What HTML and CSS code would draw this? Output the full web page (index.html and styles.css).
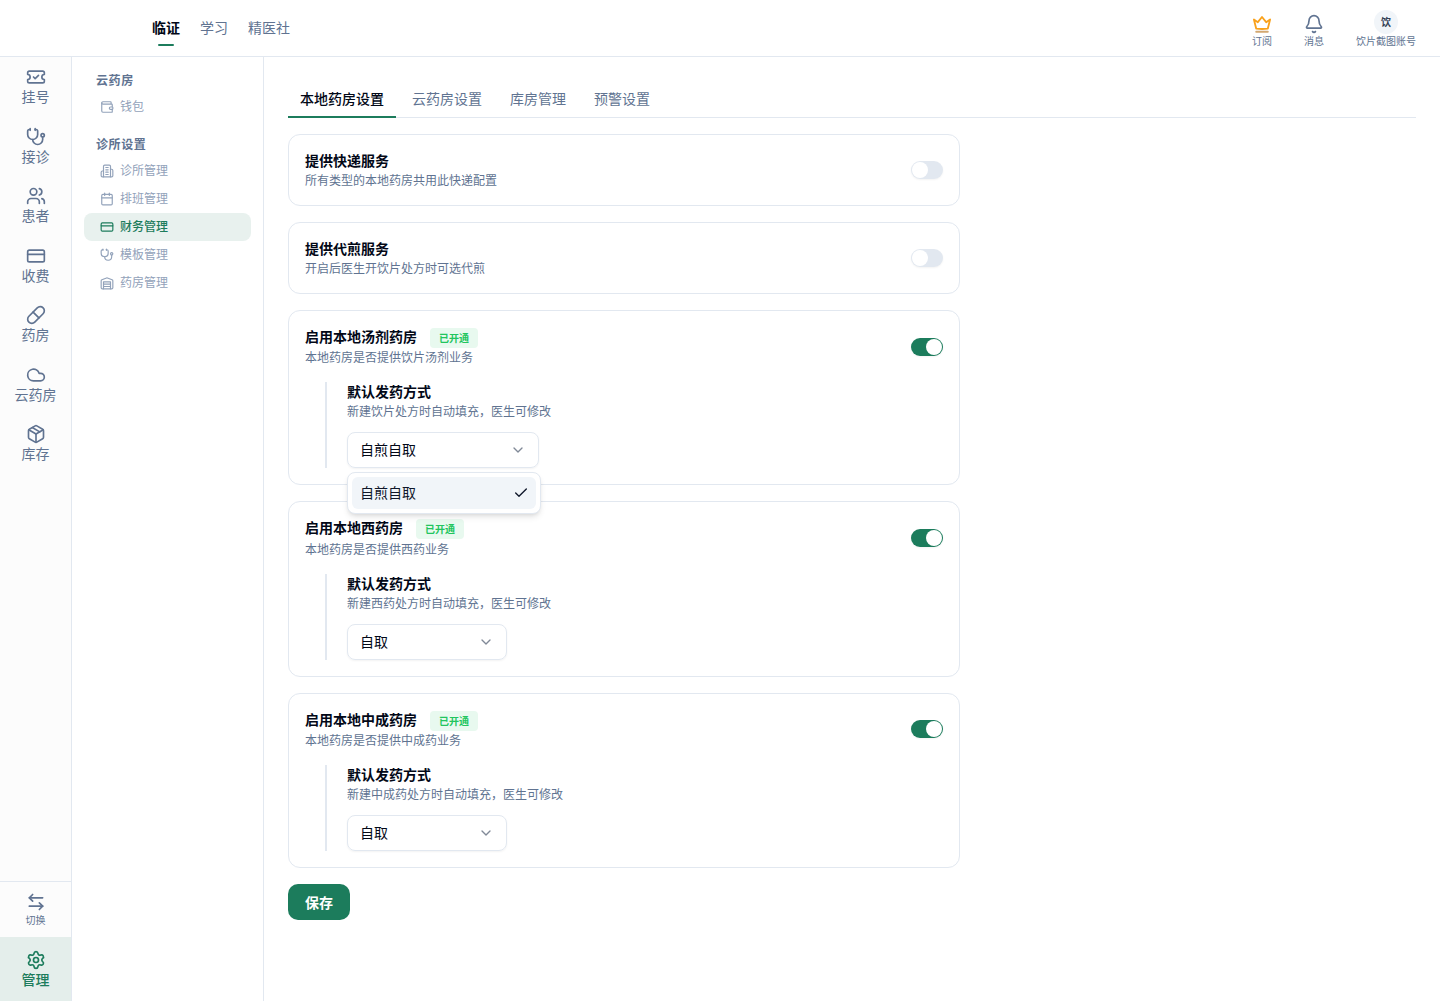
FILE: index.html
```html
<!DOCTYPE html>
<html lang="zh-Hans">
<head>
  <meta charset="UTF-8" />
  <meta name="viewport" content="width=device-width, initial-scale=1.0"/>
  <title>药房管理</title>
  <link rel="stylesheet" href="styles.css">
</head>
<body>
  <header class="topbar">
    <nav class="top-nav">
      <a class="top-link active">临证</a>
      <a class="top-link">学习</a>
      <a class="top-link">精医社</a>
    </nav>
    <div class="top-actions">
      <div class="action">
        <svg class="icon crown" viewBox="0 0 24 24"><path d="M2.3 6.5 5 17.5q7 1 14 0L21.7 6.5 17 9.8 12 3.6 7 9.8Z"/><path class="crown-base" d="M5 21.3h14"/></svg>
        <span>订阅</span>
      </div>
      <div class="action">
        <svg class="icon" viewBox="0 0 24 24"><path d="M10.268 21a2 2 0 0 0 3.464 0"/><path d="M3.262 15.326A1 1 0 0 0 4 17h16a1 1 0 0 0 .74-1.673C19.41 13.956 18 12.499 18 8A6 6 0 0 0 6 8c0 4.499-1.411 5.956-2.738 7.326"/></svg>
        <span>消息</span>
      </div>
      <div class="action">
        <div class="avatar">饮</div>
        <span>饮片截图账号</span>
      </div>
    </div>
  </header>

  <div class="layout">
    <aside class="rail">
      <nav class="rail-list">
        <a class="rail-item">
          <svg class="icon" viewBox="0 0 24 24"><path d="M2 9a3 3 0 1 1 0 6v2a2 2 0 0 0 2 2h16a2 2 0 0 0 2-2v-2a3 3 0 1 1 0-6V7a2 2 0 0 0-2-2H4a2 2 0 0 0-2 2Z"/><path d="m9 12 2 2 4-4"/></svg>
          <span>挂号</span>
        </a>
        <a class="rail-item">
          <svg class="icon" viewBox="0 0 24 24"><path d="M11 2v2"/><path d="M5 2v2"/><path d="M5 3H4a2 2 0 0 0-2 2v4a6 6 0 0 0 12 0V5a2 2 0 0 0-2-2h-1"/><path d="M8 15a6 6 0 0 0 12 0v-3"/><circle cx="20" cy="10" r="2"/></svg>
          <span>接诊</span>
        </a>
        <a class="rail-item">
          <svg class="icon" viewBox="0 0 24 24"><path d="M16 21v-2a4 4 0 0 0-4-4H6a4 4 0 0 0-4 4v2"/><circle cx="9" cy="7" r="4"/><path d="M22 21v-2a4 4 0 0 0-3-3.87"/><path d="M16 3.13a4 4 0 0 1 0 7.75"/></svg>
          <span>患者</span>
        </a>
        <a class="rail-item">
          <svg class="icon" viewBox="0 0 24 24"><rect x="2" y="5" width="20" height="14" rx="2"/><path d="M2 10h20"/></svg>
          <span>收费</span>
        </a>
        <a class="rail-item">
          <svg class="icon" viewBox="0 0 24 24"><path d="m10.5 20.5 10-10a4.95 4.95 0 1 0-7-7l-10 10a4.95 4.95 0 1 0 7 7Z"/><path d="m8.5 8.5 7 7"/></svg>
          <span>药房</span>
        </a>
        <a class="rail-item">
          <svg class="icon" viewBox="0 0 24 24"><path d="M17.5 19H9a7 7 0 1 1 6.71-9h1.79a4.5 4.5 0 1 1 0 9Z"/></svg>
          <span>云药房</span>
        </a>
        <a class="rail-item">
          <svg class="icon" viewBox="0 0 24 24"><path d="M11 21.73a2 2 0 0 0 2 0l7-4A2 2 0 0 0 21 16V8a2 2 0 0 0-1-1.73l-7-4a2 2 0 0 0-2 0l-7 4A2 2 0 0 0 3 8v8a2 2 0 0 0 1 1.73z"/><path d="M12 22V12"/><path d="m3.3 7 8.7 5 8.7-5"/><path d="m7.5 4.27 9 5.15"/></svg>
          <span>库存</span>
        </a>
      </nav>
      <a class="rail-switch">
        <svg class="icon" viewBox="0 0 24 24"><path d="M8 3 4 7l4 4"/><path d="M4 7h16"/><path d="m16 21 4-4-4-4"/><path d="M20 17H4"/></svg>
        <span>切换</span>
      </a>
      <a class="rail-manage">
        <svg class="icon" viewBox="0 0 24 24"><path d="M9.671 4.136a2.34 2.34 0 0 1 4.659 0 2.34 2.34 0 0 0 3.319 1.915 2.34 2.34 0 0 1 2.33 4.033 2.34 2.34 0 0 0 0 3.831 2.34 2.34 0 0 1-2.33 4.033 2.34 2.34 0 0 0-3.319 1.915 2.34 2.34 0 0 1-4.659 0 2.34 2.34 0 0 0-3.32-1.915 2.34 2.34 0 0 1-2.33-4.033 2.34 2.34 0 0 0 0-3.831A2.34 2.34 0 0 1 6.35 6.051a2.34 2.34 0 0 0 3.319-1.915"/><circle cx="12" cy="12" r="3"/></svg>
        <span>管理</span>
      </a>
    </aside>

    <aside class="side">
      <h3 class="side-title">云药房</h3>
      <a class="side-item">
        <svg class="icon" viewBox="0 0 24 24"><path d="M19 7V4a1 1 0 0 0-1-1H5a2 2 0 0 0 0 4h15a1 1 0 0 1 1 1v4h-3a2 2 0 0 0 0 4h3a1 1 0 0 0 1-1v-2a1 1 0 0 0-1-1"/><path d="M3 5v14a2 2 0 0 0 2 2h15a1 1 0 0 0 1-1v-4"/></svg>
        <span>钱包</span>
      </a>
      <h3 class="side-title">诊所设置</h3>
      <a class="side-item">
        <svg class="icon" viewBox="0 0 24 24"><path d="M6 22V4a2 2 0 0 1 2-2h8a2 2 0 0 1 2 2v18Z"/><path d="M6 12H4a2 2 0 0 0-2 2v6a2 2 0 0 0 2 2h2"/><path d="M18 9h2a2 2 0 0 1 2 2v9a2 2 0 0 1-2 2h-2"/><path d="M10 6h4"/><path d="M10 10h4"/><path d="M10 14h4"/><path d="M10 18h4"/></svg>
        <span>诊所管理</span>
      </a>
      <a class="side-item">
        <svg class="icon" viewBox="0 0 24 24"><path d="M8 2v4"/><path d="M16 2v4"/><rect x="3" y="4" width="18" height="18" rx="2"/><path d="M3 10h18"/></svg>
        <span>排班管理</span>
      </a>
      <a class="side-item active">
        <svg class="icon" viewBox="0 0 24 24"><rect x="2" y="5" width="20" height="14" rx="2"/><path d="M2 10h20"/></svg>
        <span>财务管理</span>
      </a>
      <a class="side-item">
        <svg class="icon" viewBox="0 0 24 24"><path d="M11 2v2"/><path d="M5 2v2"/><path d="M5 3H4a2 2 0 0 0-2 2v4a6 6 0 0 0 12 0V5a2 2 0 0 0-2-2h-1"/><path d="M8 15a6 6 0 0 0 12 0v-3"/><circle cx="20" cy="10" r="2"/></svg>
        <span>模板管理</span>
      </a>
      <a class="side-item">
        <svg class="icon" viewBox="0 0 24 24"><path d="M22 8.35V20a2 2 0 0 1-2 2H4a2 2 0 0 1-2-2V8.35A2 2 0 0 1 3.26 6.5l8-3.2a2 2 0 0 1 1.48 0l8 3.2A2 2 0 0 1 22 8.35Z"/><path d="M6 18h12"/><path d="M6 14h12"/><path d="M6 22V10h12v12"/></svg>
        <span>药房管理</span>
      </a>
    </aside>

    <main class="main">
      <div class="tabs">
        <a class="tab active">本地药房设置</a>
        <a class="tab">云药房设置</a>
        <a class="tab">库房管理</a>
        <a class="tab">预警设置</a>
      </div>

      <div class="cards">
        <section class="card">
          <div class="card-head">
            <div class="card-info">
              <h4>提供快递服务</h4>
              <p>所有类型的本地药房共用此快递配置</p>
            </div>
            <button class="toggle"></button>
          </div>
        </section>

        <section class="card">
          <div class="card-head">
            <div class="card-info">
              <h4>提供代煎服务</h4>
              <p>开启后医生开饮片处方时可选代煎</p>
            </div>
            <button class="toggle"></button>
          </div>
        </section>

        <section class="card">
          <div class="card-head">
            <div class="card-info">
              <h4 class="with-badge">启用本地汤剂药房<span class="badge">已开通</span></h4>
              <p>本地药房是否提供饮片汤剂业务</p>
            </div>
            <button class="toggle on"></button>
          </div>
          <div class="sub">
            <h4>默认发药方式</h4>
            <p>新建饮片处方时自动填充，医生可修改</p>
            <div class="select wide">
              <span>自煎自取</span>
              <svg class="icon" viewBox="0 0 24 24"><path d="m6 9 6 6 6-6"/></svg>
              <div class="menu">
                <div class="option">
                  <span>自煎自取</span>
                  <svg class="icon" viewBox="0 0 24 24"><path d="M20 6 9 17l-5-5"/></svg>
                </div>
              </div>
            </div>
          </div>
        </section>

        <section class="card">
          <div class="card-head">
            <div class="card-info">
              <h4 class="with-badge">启用本地西药房<span class="badge">已开通</span></h4>
              <p>本地药房是否提供西药业务</p>
            </div>
            <button class="toggle on"></button>
          </div>
          <div class="sub">
            <h4>默认发药方式</h4>
            <p>新建西药处方时自动填充，医生可修改</p>
            <div class="select">
              <span>自取</span>
              <svg class="icon" viewBox="0 0 24 24"><path d="m6 9 6 6 6-6"/></svg>
            </div>
          </div>
        </section>

        <section class="card">
          <div class="card-head">
            <div class="card-info">
              <h4 class="with-badge">启用本地中成药房<span class="badge">已开通</span></h4>
              <p>本地药房是否提供中成药业务</p>
            </div>
            <button class="toggle on"></button>
          </div>
          <div class="sub">
            <h4>默认发药方式</h4>
            <p>新建中成药处方时自动填充，医生可修改</p>
            <div class="select">
              <span>自取</span>
              <svg class="icon" viewBox="0 0 24 24"><path d="m6 9 6 6 6-6"/></svg>
            </div>
          </div>
        </section>
      </div>

      <button class="save">保存</button>
    </main>
  </div>
</body>
</html>
```
FILE: styles.css
```css
* { margin: 0; padding: 0; box-sizing: border-box; }
body {
  height: 100vh; overflow: hidden;
  display: flex; flex-direction: column;
  font-family: Inter, "Noto Sans CJK SC", sans-serif;
  font-size: 14px; line-height: 20px;
  color: #020817; background: #fff;
}
button { border: none; font-family: inherit; cursor: pointer; }
h3, h4 { font-weight: 700; }

.icon {
  width: 20px; height: 20px; flex: none;
  fill: none; stroke: currentColor; stroke-width: 2;
  stroke-linecap: round; stroke-linejoin: round;
}

/* header */
.topbar {
  height: 57px; flex: none;
  display: flex; justify-content: space-between;
  padding: 0 24px 0 152px;
  border-bottom: 1px solid #e2e8f0;
}
.top-nav { display: flex; gap: 20px; align-items: center; color: #607391; }
.top-link { position: relative; }
.top-link.active { color: #020817; font-weight: 700; }
.top-link.active::after {
  content: ""; position: absolute; left: 50%; bottom: -8px;
  width: 16px; height: 2px; margin-left: -8px;
  border-radius: 1px; background: #1c7c5c;
}
.top-actions { display: flex; gap: 32px; padding-top: 10px; color: #607391; }
.action {
  display: flex; flex-direction: column; align-items: center;
  font-size: 10px; line-height: 15px;
}
.action .icon { margin: 4px 0 0; stroke-width: 2; }
.action .crown { stroke: #f9a11b; stroke-width: 2.2; }
.crown .crown-base { stroke: #d3a870; }
.avatar {
  width: 24px; height: 24px; border-radius: 50%;
  background: #f1f5f9; color: #334155;
  font-weight: 700; line-height: 25px; text-align: center;
}

.layout { flex: 1; min-height: 0; display: flex; }

/* icon rail */
.rail {
  width: 72px; flex: none;
  display: flex; flex-direction: column;
  background: #fcfcfc; border-right: 1px solid #e2e8f0;
  color: #607391;
}
.rail-list { flex: 1; padding-top: 10px; }
.rail-item, .rail-switch, .rail-manage { display: flex; flex-direction: column; align-items: center; }
.rail-item { height: 59.5px; }
.rail-switch {
  height: 56px; padding-top: 10px;
  border-top: 1px solid #e2e8f0;
  font-size: 10px; line-height: 17px;
}
.rail-manage {
  height: 64px; padding-top: 13px;
  background: #e4eeeb; color: #1c7c5c; font-weight: 500;
}

/* settings menu */
.side {
  width: 192px; flex: none;
  padding: 14px 12px 0;
  border-right: 1px solid #e2e8f0;
  font-size: 12px;
}
.side-title {
  padding: 0 12px 2px;
  font-size: 12px; line-height: 20px; letter-spacing: 0.6px; color: #607391;
}
.side-item + .side-title { margin-top: 14px; }
.side-item {
  display: flex; align-items: center; gap: 6px;
  height: 28px; padding-left: 16px;
  border-radius: 8px; color: #92a2ba;
}
.side-item .icon { width: 14px; height: 14px; }
.side-item.active { background: #e8f1ee; color: #1c7c5c; font-weight: 500; }

/* content */
.main { flex: 1; padding: 24px; }
.tabs {
  display: flex; gap: 4px; height: 37px;
  border-bottom: 1px solid #e2e8f0; color: #607391;
}
.tab { height: 37px; padding: 8px 12px 0; }
.tab.active { color: #020817; font-weight: 500; border-bottom: 2px solid #1c7c5c; }

.cards { width: 672px; margin: 16px 0; display: flex; flex-direction: column; gap: 16px; }
.card { border: 1px solid #e2e8f0; border-radius: 12px; padding: 16px; }
.card-head { display: flex; justify-content: space-between; align-items: center; }
.card h4 { font-size: 14px; font-weight: 700; }
.card p { margin-top: 2px; font-size: 12px; line-height: 16px; color: #607391; }
.card h4.with-badge { display: flex; height: 21.4px; }
.badge {
  height: 20px; margin: 1px 0 0 13px; padding: 0 9px;
  border-radius: 4px; background: #e8f9ef; color: #22c55e;
  font-size: 10px; line-height: 21px;
}

.toggle {
  width: 32px; height: 18px; padding: 1px;
  border-radius: 9px; background: #e2e8f0;
  box-shadow: 0 1px 2px rgba(0,0,0,0.05);
}
.toggle::before {
  content: ""; display: block;
  width: 16px; height: 16px; border-radius: 50%; background: #fff;
}
.toggle.on { background: #1c7c5c; }
.toggle.on::before { margin-left: 14px; }

.sub { margin: 16px 0 0 20px; padding-left: 20px; border-left: 2px solid #e2e8f0; }
.sub p { margin: 2px 0 0; }
.select {
  position: relative; width: 160px; height: 36px; margin-top: 12px;
  display: flex; align-items: center; justify-content: space-between;
  padding: 0 12px; border: 1px solid #e2e8f0; border-radius: 8px;
  box-shadow: 0 1px 2px rgba(0,0,0,0.05);
}
.select.wide { width: 192px; }
.select .icon { width: 16px; height: 16px; }
.select > .icon { color: #808997; }

.menu {
  position: absolute; left: -1px; top: 39px; z-index: 2;
  width: 194px; padding: 4px;
  background: #fff; border: 1px solid #e2e8f0; border-radius: 8px;
  box-shadow: 0 4px 6px -1px rgba(0,0,0,0.1), 0 2px 4px -2px rgba(0,0,0,0.1);
}
.option {
  display: flex; align-items: center; justify-content: space-between;
  height: 32px; padding: 0 7px 0 8px;
  border-radius: 6px; background: #f1f5f9; color: #0f172a;
}

.save {
  width: 62px; height: 36px; border-radius: 10px;
  background: #1c7c5c; color: #fff;
  font-size: 14px; font-weight: 700;
}
```
